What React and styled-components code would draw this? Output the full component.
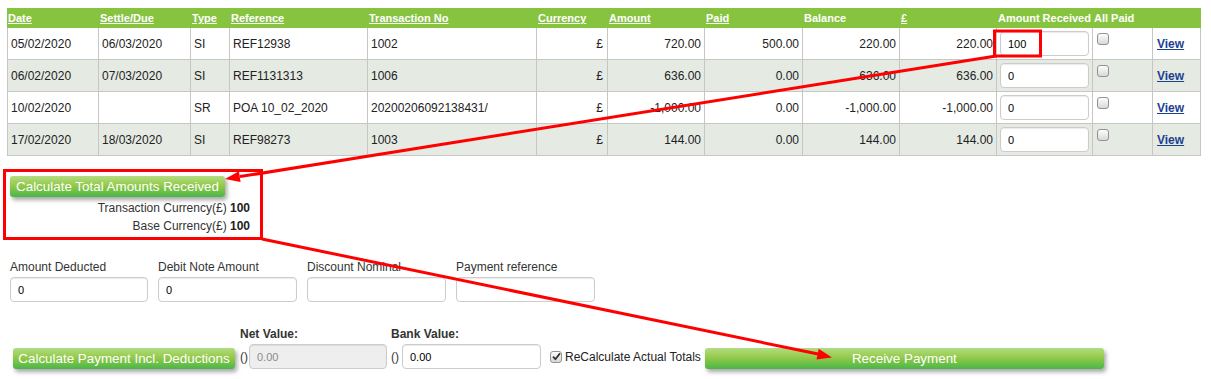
import React from "react";
import styled, { createGlobalStyle } from "styled-components";

const GlobalStyle = createGlobalStyle`
  html, body {
    margin: 0;
    padding: 0;
    background: #fff;
  }
  body {
    font-family: "Liberation Sans", Arial, sans-serif;
    font-size: 12px;
    color: #222;
  }
`;

/*************************************************************************/

const Page = styled.div`
  position: relative;
  width: 1211px;
  height: 379px;
  box-sizing: border-box;
  padding: 8px 0 0 7px;
  overflow: hidden;
`;

const Grid = styled.table`
  width: 1194px;
  table-layout: fixed;
  border-collapse: separate;
  border-spacing: 0;
  font-size: 12px;
`;

const HeadCell = styled.th`
  height: 20px;
  padding: 0 1px;
  background: #86c440;
  color: #fff;
  font-size: 11px;
  font-weight: bold;
  text-align: left;
  white-space: nowrap;
  text-decoration: ${props => (props.$link ? "underline" : "none")};
`;

const Row = styled.tr`
  background: ${props => (props.$alt ? "#e5eae3" : "#fff")};
`;

const Cell = styled.td`
  box-sizing: border-box;
  height: 32px;
  padding: 0 ${props => props.$pad || 3}px;
  border-right: 1px solid #c6c6c6;
  border-bottom: 1px solid #c6c6c6;
  color: #222;
  white-space: nowrap;
  text-align: ${props => (props.$right ? "right" : "left")};
  vertical-align: ${props => (props.$top ? "top" : "middle")};
  padding-top: ${props => (props.$top ? "5px" : "0")};
  &:first-child {
    border-left: 1px solid #c6c6c6;
  }
`;

const ViewLink = styled.a`
  color: #1d3f8f;
  font-weight: bold;
  text-decoration: underline;
  cursor: pointer;
`;

const Field = styled.input`
  box-sizing: border-box;
  width: ${props => props.$w || 139}px;
  height: 25px;
  margin: 0;
  padding: 0 7px;
  border: 1px solid #cccccc;
  border-radius: 4px;
  background: #fff;
  box-shadow: inset 0 1px 1px rgba(0, 0, 0, 0.08);
  font: 11px "Liberation Sans", Arial, sans-serif;
  color: #000;
  outline: none;
  &:disabled {
    background: #eeeeee;
    color: #8a8a8a;
  }
`;

const Tick = styled.span`
  display: inline-flex;
  align-items: center;
  justify-content: center;
  box-sizing: border-box;
  width: 12px;
  height: 12px;
  border: 1px solid #929292;
  border-radius: 3px;
  background: linear-gradient(#fdfdfd, #d8d8d8);
  vertical-align: top;
`;

const GreenButton = styled.button`
  box-sizing: border-box;
  width: ${props => props.$w}px;
  height: 21px;
  margin: 0 0 0 ${props => props.$ml || 0}px;
  padding: 0;
  border: 0;
  border-radius: 3px;
  background: linear-gradient(#b3dc85 0%, #93ca48 45%, #4ab649 100%);
  box-shadow: 2px 3px 4px rgba(0, 0, 0, 0.35);
  color: #fff;
  font: 13.4px "Liberation Sans", Arial, sans-serif;
  text-align: center;
  white-space: nowrap;
  cursor: pointer;
`;

/*************************************************************************/

const CalcBlock = styled.div`
  margin-top: 20px;
  padding-left: 3px;
`;

const Totals = styled.div`
  width: 243px;
  margin-left: -3px;
  margin-top: 2px;
  text-align: right;
  line-height: 18px;
  color: #333;
  b {
    color: #222;
  }
`;

const FieldsRow = styled.div`
  display: flex;
  gap: 10px;
  margin-top: 24px;
  padding-left: 3px;
`;

const FieldGroup = styled.div`
  display: flex;
  flex-direction: column;
`;

const FieldLabel = styled.label`
  line-height: 16px;
  color: #333;
  font-weight: ${props => (props.$bold ? "bold" : "normal")};
  margin-bottom: 2px;
`;

const ActionRow = styled.div`
  display: flex;
  align-items: flex-end;
  margin-top: 24px;
`;

const ValueGroup = styled.div`
  display: flex;
  flex-direction: column;
  margin-left: ${props => props.$ml}px;
`;

const ValueLine = styled.div`
  display: flex;
  align-items: center;
  span {
    color: #333;
    margin-right: ${props => props.$gap}px;
  }
`;

const CheckLine = styled.div`
  display: flex;
  align-items: center;
  height: 25px;
  margin-left: 9px;
  color: #222;
  span + span {
    margin-left: 3px;
  }
`;

const Overlay = styled.svg`
  position: absolute;
  left: 0;
  top: 0;
  pointer-events: none;
`;

/*************************************************************************/

const columns = [
    { title: "Date", w: 92, link: true },
    { title: "Settle/Due", w: 92, link: true },
    { title: "Type", w: 39, link: true },
    { title: "Reference", w: 138, link: true },
    { title: "Transaction No", w: 169, link: true },
    { title: "Currency", w: 71, link: true },
    { title: "Amount", w: 97, link: true },
    { title: "Paid", w: 98, link: true },
    { title: "Balance", w: 97 },
    { title: "£", w: 97, link: true },
    { title: "Amount Received", w: 96 },
    { title: "All Paid", w: 60 },
    { title: "", w: 48 }
];

const rows = [
    ["05/02/2020", "06/03/2020", "SI", "REF12938", "1002", "720.00", "500.00", "220.00", "220.00", "100"],
    ["06/02/2020", "07/03/2020", "SI", "REF1131313", "1006", "636.00", "0.00", "636.00", "636.00", "0"],
    ["10/02/2020", "", "SR", "POA 10_02_2020", "20200206092138431/", "-1,000.00", "0.00", "-1,000.00", "-1,000.00", "0"],
    ["17/02/2020", "18/03/2020", "SI", "REF98273", "1003", "144.00", "0.00", "144.00", "144.00", "0"]
];

const CheckMark = () => (
    <svg width="9" height="9" viewBox="0 0 9 9">
        <path d="M1 4.6 L3.4 7.2 L8 1.4" fill="none" stroke="#333" strokeWidth="1.8" />
    </svg>
);

const Arrows = () => (
    <Overlay width="1211" height="379" viewBox="0 0 1211 379">
        <g stroke="#ff0000" strokeWidth="3" fill="none">
            <rect x="994.5" y="31" width="46" height="25" />
            <rect x="4.5" y="170.5" width="257" height="68" />
            <line x1="996" y1="56" x2="240" y2="176.6" />
            <line x1="262" y1="239" x2="818" y2="354" />
        </g>
        <g fill="#ff0000">
            <polygon points="225,179 240.6,182.1 238.9,171.2" />
            <polygon points="832,357.5 816.5,359.6 818.7,348.8" />
        </g>
    </Overlay>
);

const App = () => {
    return (
        <Page>
            <GlobalStyle />
            <Grid>
                <colgroup>
                    {columns.map((c, i) => <col key={i} style={{ width: c.w }} />)}
                </colgroup>
                <thead>
                    <tr>
                        {columns.map((c, i) => (
                            <HeadCell key={i} $link={c.link}>{c.title}</HeadCell>
                        ))}
                    </tr>
                </thead>
                <tbody>
                    {rows.map((r, i) => (
                        <Row key={i} $alt={i % 2 === 1}>
                            <Cell>{r[0]}</Cell>
                            <Cell>{r[1]}</Cell>
                            <Cell>{r[2]}</Cell>
                            <Cell>{r[3]}</Cell>
                            <Cell>{r[4]}</Cell>
                            <Cell $right $pad={4}>£</Cell>
                            <Cell $right>{r[5]}</Cell>
                            <Cell $right>{r[6]}</Cell>
                            <Cell $right>{r[7]}</Cell>
                            <Cell $right>{r[8]}</Cell>
                            <Cell>
                                <Field $w={89} defaultValue={r[9]} />
                            </Cell>
                            <Cell $top $pad={4}>
                                <Tick />
                            </Cell>
                            <Cell $pad={4}>
                                <ViewLink>View</ViewLink>
                            </Cell>
                        </Row>
                    ))}
                </tbody>
            </Grid>

            <CalcBlock>
                <GreenButton $w={215}>Calculate Total Amounts Received</GreenButton>
                <Totals>
                    <div>Transaction Currency(£) <b>100</b></div>
                    <div>Base Currency(£) <b>100</b></div>
                </Totals>
            </CalcBlock>

            <FieldsRow>
                <FieldGroup>
                    <FieldLabel>Amount Deducted</FieldLabel>
                    <Field $w={138} defaultValue="0" />
                </FieldGroup>
                <FieldGroup>
                    <FieldLabel>Debit Note Amount</FieldLabel>
                    <Field defaultValue="0" />
                </FieldGroup>
                <FieldGroup>
                    <FieldLabel>Discount Nominal</FieldLabel>
                    <Field defaultValue="" />
                </FieldGroup>
                <FieldGroup>
                    <FieldLabel>Payment reference</FieldLabel>
                    <Field defaultValue="" />
                </FieldGroup>
            </FieldsRow>

            <ActionRow>
                <GreenButton $w={222} $ml={6}>Calculate Payment Incl. Deductions</GreenButton>
                <ValueGroup $ml={5}>
                    <FieldLabel $bold>Net Value:</FieldLabel>
                    <ValueLine $gap={1}>
                        <span>()</span>
                        <Field $w={138} disabled defaultValue="0.00" />
                    </ValueLine>
                </ValueGroup>
                <ValueGroup $ml={4}>
                    <FieldLabel $bold>Bank Value:</FieldLabel>
                    <ValueLine $gap={3}>
                        <span>()</span>
                        <Field defaultValue="0.00" />
                    </ValueLine>
                </ValueGroup>
                <CheckLine>
                    <Tick><CheckMark /></Tick>
                    <span>ReCalculate Actual Totals</span>
                </CheckLine>
                <GreenButton $w={399} $ml={4}>Receive Payment</GreenButton>
            </ActionRow>

            <Arrows />
        </Page>
    );
};

export default App;
